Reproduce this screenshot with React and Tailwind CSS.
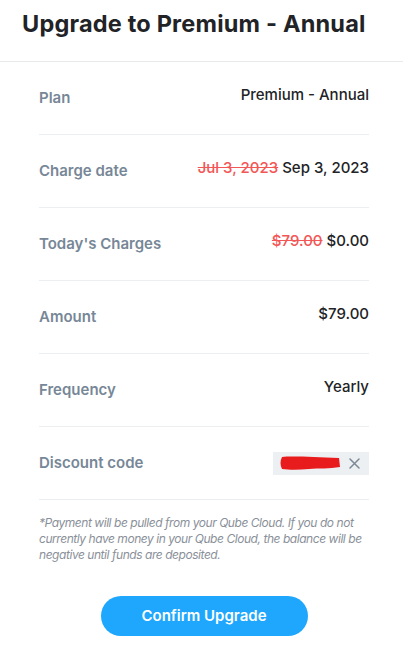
import React from "react";

const rows = [
  { label: "Plan", value: <span>Premium - Annual</span> },
  {
    label: "Charge date",
    value: (
      <span>
        <span className="text-[#f25656] line-through">Jul 3, 2023</span> Sep 3, 2023
      </span>
    ),
  },
  {
    label: "Today's Charges",
    value: (
      <span>
        <span className="text-[#f25656] line-through">$79.00</span> $0.00
      </span>
    ),
  },
  { label: "Amount", value: <span>$79.00</span> },
  { label: "Frequency", value: <span>Yearly</span> },
];

const App = () => {
  return (
    <div className="w-[403px] h-[645px] bg-white overflow-hidden" style={{ fontFamily: "Inter, 'Noto Sans', sans-serif" }}>
      <div className="h-[62px] border-b border-[#e8ebee] pl-[22px] pt-[9px]">
        <h1 className="text-[23.5px] leading-[30px] font-bold text-[#222326] tracking-[0.2px]">Upgrade to Premium - Annual</h1>
      </div>
      <div className="ml-[39px] mr-[34px]">
        {rows.map(r => (
          <div key={r.label} className="h-[73px] border-b border-[#eceff2] flex items-center justify-between">
            <span className="text-[15px] font-semibold text-[#778797]">{r.label}</span>
            <span className="text-[15px] font-medium text-[#222326] pb-[6px]">{r.value}</span>
          </div>
        ))}
        <div className="h-[73px] border-b border-[#eceff2] flex items-center justify-between">
          <span className="text-[15px] font-semibold text-[#778797]">Discount code</span>
          <div className="w-[96px] h-[23px] bg-[#edf0f3] flex items-center pl-[6px] pr-[9px] justify-between">
            <svg width="62" height="16" viewBox="0 0 62 16">
              <path d="M3 2 C12 1 35 2 60 3 L61 12 C50 14 40 13 30 14 C20 15 10 15 3 14 C1 10 1 6 3 2 Z" fill="#e81c1c" />
            </svg>
            <svg width="11" height="11" viewBox="0 0 11 11" stroke="#7d8894" strokeWidth="1.5" strokeLinecap="round">
              <path d="M1 1 L10 10 M10 1 L1 10" />
            </svg>
          </div>
        </div>
        <p className="mt-[15px] text-[12px] leading-[16px] italic text-[#8a9099] tracking-[-0.45px]">
          *Payment will be pulled from your Qube Cloud. If you do not currently have money in your Qube Cloud, the balance will be negative until funds are deposited.
        </p>
        <div className="flex justify-center mt-[33px]">
          <button className="w-[207px] h-[40px] rounded-full bg-[#1ea7fd] text-white text-[15px] font-semibold">
            Confirm Upgrade
          </button>
        </div>
      </div>
    </div>
  );
};

export default App;
